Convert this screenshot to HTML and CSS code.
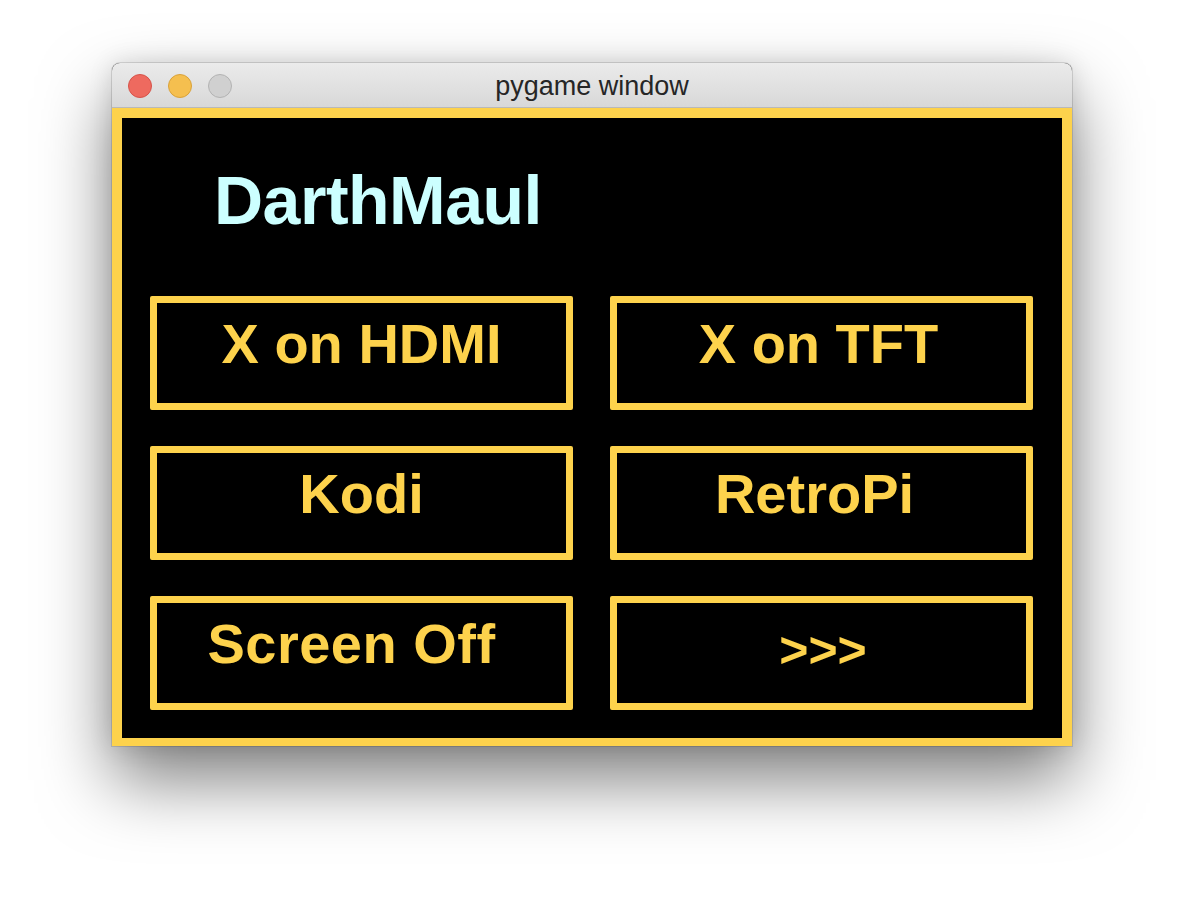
FILE: index.html
```html
<!DOCTYPE html>
<html>
<head>
<meta charset="utf-8">
<link rel="stylesheet" href="styles.css">
</head>
<body>
<div class="window">
  <div class="titlebar">
    <div class="lights">
      <span class="light red"></span>
      <span class="light yellow"></span>
      <span class="light gray"></span>
    </div>
    <div class="title">pygame window</div>
  </div>
  <div class="frame">
    <div class="screen">
      <div class="header">DarthMaul</div>
      <div class="grid">
        <div class="btn">X on HDMI</div>
        <div class="btn btn-tft">X on TFT</div>
        <div class="btn">Kodi</div>
        <div class="btn btn-retro">RetroPi</div>
        <div class="btn btn-screen">Screen Off</div>
        <div class="btn btn-more">&gt;&gt;&gt;</div>
      </div>
    </div>
  </div>
</div>
</body>
</html>
```
FILE: styles.css
```css
html, body {
  margin: 0;
  padding: 0;
  background: #ffffff;
}
body {
  padding: 63px 0 0 112px;
  height: 908px;
  box-sizing: border-box;
  overflow: hidden;
}
.window {
  width: 960px;
  border-radius: 8px 8px 0 0;
  box-shadow: 0 34px 70px rgba(0, 0, 0, 0.5), 0 0 24px rgba(0, 0, 0, 0.12), 0 0 0 1px rgba(0, 0, 0, 0.12);
  background: #000;
}
.titlebar {
  position: relative;
  height: 44px;
  border-bottom: 1px solid #b9b9b9;
  border-radius: 8px 8px 0 0;
  background: linear-gradient(#ebebeb, #d8d8d8);
  display: flex;
  align-items: center;
  justify-content: center;
}
.lights {
  position: absolute;
  left: 16px;
  top: 11px;
  display: flex;
  gap: 16px;
}
.light {
  width: 24px;
  height: 24px;
  border-radius: 50%;
  box-sizing: border-box;
}
.red { background: #ee6a5f; border: 1px solid #d6534a; }
.yellow { background: #f5bf4f; border: 1px solid #d9a23a; }
.gray { background: #d0d0d0; border: 1px solid #b3b3b3; }
.title {
  font-family: "Liberation Sans", Arial, sans-serif;
  font-size: 27px;
  color: #262626;
  padding-top: 2px;
}
.frame {
  border: 10px solid #fdd24c;
  border-bottom-width: 8px;
  background: #000;
}
.screen {
  background: #000;
  height: 620px;
  box-sizing: border-box;
  padding: 0 28px 28px 28px;
}
.header {
  height: 178px;
  box-sizing: border-box;
  padding: 48px 0 0 64px;
  font-family: "Liberation Sans", Arial, sans-serif;
  font-weight: bold;
  font-size: 68px;
  line-height: 68px;
  letter-spacing: -0.5px;
  color: #ccffff;
}
.grid {
  display: grid;
  grid-template-columns: 423px 423px;
  grid-auto-rows: 114px;
  column-gap: 37px;
  row-gap: 36px;
}
.btn {
  border: 7px solid #fdd24c;
  border-radius: 2px;
  box-sizing: border-box;
  padding-top: 13px;
  text-align: center;
  font-family: "Liberation Sans", Arial, sans-serif;
  font-weight: bold;
  font-size: 56px;
  line-height: 56px;
  color: #fdd24c;
}
.btn-tft { padding-right: 6px; }
.btn-retro { padding-right: 14px; }
.btn-screen { padding-right: 20px; letter-spacing: 0.5px; }
.btn-more { padding-left: 3px; padding-top: 19px; font-size: 50px; }
```
